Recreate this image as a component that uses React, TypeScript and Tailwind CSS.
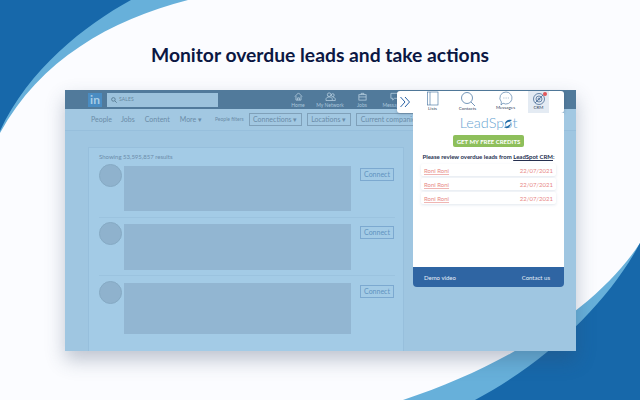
import React from "react";

const font = { fontFamily: "Lato, 'Open Sans', sans-serif" };

function NavItem({ label, icon }: { label: string; icon: React.ReactNode }) {
  return (
    <div className="flex w-[32px] flex-col items-center text-[5px] leading-[6px] text-[#a9c6dc]">
      {icon}
      <span className="mt-[1px] whitespace-nowrap">{label}</span>
    </div>
  );
}

function Result({ rowClass, boxClass }: { rowClass: string; boxClass: string }) {
  return (
    <div className={`flex ${rowClass}`}>
      <div className="h-[23px] w-[23px] shrink-0 rounded-full border border-[#86aac4] bg-[#8fb2cd]" />
      <div className={`ml-[2px] mt-[2px] w-[227px] bg-[#92b6d2] ${boxClass}`} />
      <div className="ml-[9px] mt-[4px] flex h-[13px] w-[34px] items-center justify-center border border-[#7ca9d0] text-[7px] text-[#5f93c0]">
        Connect
      </div>
    </div>
  );
}

function Lead() {
  return (
    <div className="flex h-[12px] items-center justify-between rounded-[2px] bg-white px-[3px] text-[6px] text-[#e78886] shadow-[0_1px_3px_rgba(90,120,160,0.18)]">
      <span className="underline decoration-[#efb5b3]">Roni Roni</span>
      <span>22/07/2021</span>
    </div>
  );
}

function Tool({ label, children, active }: { label: string; children: React.ReactNode; active?: boolean }) {
  return (
    <div className={`flex h-[22px] w-[21px] flex-col items-center ${active ? "bg-[#e4ebf3]" : ""}`}>
      {children}
      <span className="mt-[-1px] whitespace-nowrap text-[4.5px] leading-[6px] text-[#33435c]">{label}</span>
    </div>
  );
}

export default function App() {
  return (
    <div className="relative h-[400px] w-[640px] overflow-hidden bg-[#fbfcff]" style={font}>
      <svg className="absolute left-0 top-0" width="640" height="400" viewBox="0 0 640 400">
        <path d="M0 0H188C110 20 40 60 0 133Z" fill="#67b0da" />
        <path d="M0 0H131C85 25 28 70 0 131Z" fill="#1768aa" />
        <path d="M640 243C600 305 510 365 403 400H640Z" fill="#67b0da" />
        <path d="M640 243C610 300 550 360 475 400H640Z" fill="#1768aa" />
      </svg>

      <h1 className="relative pt-[43px] text-center text-[19.3px] font-bold leading-[24px] text-[#0b1743]">
        Monitor overdue leads and take actions
      </h1>

      <div className="relative ml-[65px] mt-[23px] h-[261px] w-[511px] bg-[#9fc6e1] shadow-[0_9px_18px_rgba(50,70,100,0.3)]">
        <div className="flex h-[19px] items-center bg-[#517a9b] pl-[23px]">
          <div className="flex h-[14px] w-[14px] items-center justify-center bg-[#4a8cc2] text-[12px] font-bold leading-none text-[#a8cde6]">
            in
          </div>
          <div className="ml-[5px] flex h-[14px] w-[111px] items-center bg-[#9cc2dc] pl-[4px] text-[5px] tracking-wide text-[#66889f]">
            <svg width="6" height="6" viewBox="0 0 10 10" fill="none" stroke="#55788f" strokeWidth="1.4" className="mr-[2px]">
              <circle cx="4" cy="4" r="3" />
              <path d="M6.5 6.5 9.5 9.5" />
            </svg>
            SALES
          </div>
          <div className="ml-[64px] flex">
            <NavItem label="Home" icon={<svg width="9" height="9" viewBox="0 0 10 10" fill="none" stroke="#c0d6e6" strokeWidth=".8"><path d="M1 5 5 1l4 4M2.2 4.5V9h5.6V4.5M4 9V6.5h2V9" /></svg>} />
            <NavItem label="My Network" icon={<svg width="11" height="9" viewBox="0 0 12 10" fill="none" stroke="#c0d6e6" strokeWidth=".8"><circle cx="4.5" cy="3" r="2" /><circle cx="8.5" cy="3.5" r="1.6" /><path d="M1 9.5V8c0-1.5 1.5-2.500 3.500-2.500S8 6.500 8 8v1.500ZM8.500 5.800c1.500 0 2.800.8 2.800 2.200v1.500H8" /></svg>} />
            <NavItem label="Jobs" icon={<svg width="9" height="9" viewBox="0 0 10 10" fill="none" stroke="#c0d6e6" strokeWidth=".8"><rect x="1" y="3" width="8" height="6" /><path d="M3.500 3V1.500h3V3M1 5.500h8" /></svg>} />
            <NavItem label="Messaging" icon={<svg width="9" height="9" viewBox="0 0 10 10" fill="none" stroke="#c0d6e6" strokeWidth=".8"><path d="M1 1.500h8v5.500H5L3 9V7H1Z" /></svg>} />
          </div>
        </div>

        <div className="flex h-[22px] items-center border-b border-[#97bfdc] bg-[#a2c8e2] pl-[26px] text-[7px] text-[#6b8ca8]">
          <span>People</span>
          <span className="ml-[9px]">Jobs</span>
          <span className="ml-[10px]">Content</span>
          <span className="ml-[10px]">More ▾</span>
          <span className="ml-[13px] text-[5px]">People filters</span>
          <span className="ml-[5px] flex h-[13px] w-[53px] items-center justify-center border border-[#7fa0b9]">Connections ▾</span>
          <span className="ml-[5px] flex h-[13px] w-[44px] items-center justify-center border border-[#7fa0b9]">Locations ▾</span>
          <span className="ml-[5px] flex h-[13px] w-[75px] items-center overflow-hidden whitespace-nowrap border border-[#7fa0b9] pl-[4px]">Current companies</span>
        </div>

        <div className="ml-[23px] mt-[16px] h-[204px] w-[316px] border-x border-t border-[#97bfdc] bg-[#a3cbe6] pl-[10px] pr-[8px] pt-[5px]">
          <div className="mb-[3px] text-[6px] leading-[8px] text-[#6d8dab]">Showing 53,595,857 results</div>
          <Result rowClass="h-[54px] border-b border-[#9bc3df]" boxClass="h-[45px]" />
          <Result rowClass="h-[58px] border-b border-[#9bc3df] pt-[4px]" boxClass="h-[46px]" />
          <Result rowClass="pt-[5px]" boxClass="h-[51px]" />
        </div>

        <div className="absolute right-[12px] top-[1px] w-[167px]">
          <div className="flex h-[22px] items-center rounded-[3px] bg-white pl-[2px] shadow-[0_1px_3px_rgba(50,70,100,0.3)]">
            <svg width="12" height="12" viewBox="0 0 12 12" fill="none" stroke="#2a63a6" strokeWidth="1" className="shrink-0">
              <path d="M1.500 1 6 6l-4.500 5M6 1l4.500 5L6 11" />
            </svg>
            <div className="ml-[11px] flex items-center">
              <Tool label="Lists">
                <svg width="12" height="16" viewBox="0 0 12 16" fill="none" stroke="#3b6b9c" strokeWidth=".6"><rect x=".5" y="1" width="10.500" height="13" /><path d="M3 1v13" /></svg>
              </Tool>
              <div className="w-[14px]" />
              <Tool label="Contacts">
                <svg width="16" height="16" viewBox="0 0 16 16" fill="none" stroke="#3b6b9c" strokeWidth=".7"><circle cx="7" cy="7" r="5.500" /><path d="m11 11 4 4" /></svg>
              </Tool>
              <div className="w-[17px]" />
              <Tool label="Messages">
                <svg width="14" height="15" viewBox="0 0 14 15" fill="none" stroke="#3b6b9c" strokeWidth=".6"><path d="M7 1a6 6 0 1 1-3 11.200L2 14l.4-3A6 6 0 0 1 7 1Z" /><path d="M4.500 7h.8M6.700 7h.8M8.900 7h.8" /></svg>
              </Tool>
              <div className="w-[12px]" />
              <Tool label="CRM" active>
                <div className="relative h-[15px] w-[14px]">
                  <svg width="14" height="15" viewBox="0 0 14 15" fill="none" stroke="#4a6d97" strokeWidth=".8"><circle cx="7" cy="8" r="5.500" /><circle cx="7" cy="8" r="3" /><circle cx="7" cy="8" r="1" /><path d="m3 12 8-8" /></svg>
                  <div className="absolute right-[-1px] top-[1px] h-[4px] w-[4px] rounded-full bg-[#e2565a]" />
                </div>
              </Tool>
            </div>
          </div>

          <div className="ml-[16px] flex h-[154px] w-[151px] flex-col bg-white">
            <div className="flex h-[21px] items-center justify-center text-[14.5px] font-light leading-none text-[#6aa5d2]">
              LeadSp
              <span className="relative">
                o
                <svg className="absolute left-[-1px] top-[3px]" width="10" height="10" viewBox="0 0 10 10">
                  <path d="M9 1C5 0 2 2 2 5c2-2 5-2 7-4Z" fill="#1f6aa5" />
                  <path d="M8 4C6 7 3 8 1 8c2 2 6 2 7-4Z" fill="#1f6aa5" />
                </svg>
              </span>
              t
            </div>
            <div className="mt-[1px] flex justify-center">
              <div className="flex h-[12px] w-[71px] items-center justify-center rounded-[2px] bg-[#8ebf5b] text-[6px] font-bold text-white">
                GET MY FREE CREDITS
              </div>
            </div>
            <div className="mt-[6px] whitespace-nowrap text-center text-[6px] font-bold leading-[8px] text-[#26304f]">
              Please review overdue leads from <span className="underline">LeadSpot CRM</span>:
            </div>
            <div className="mt-[3px] flex flex-col gap-[2px] px-[8px]">
              <Lead />
              <Lead />
              <Lead />
            </div>
          </div>

          <div className="ml-[16px] flex h-[20px] w-[151px] items-center justify-between rounded-b-[4px] bg-[#2f65a3] px-[11px] text-[6px] text-[#e6eef7]">
            <span>Demo video</span>
            <span className="mr-[3px]">Contact us</span>
          </div>
        </div>
      </div>
    </div>
  );
}
